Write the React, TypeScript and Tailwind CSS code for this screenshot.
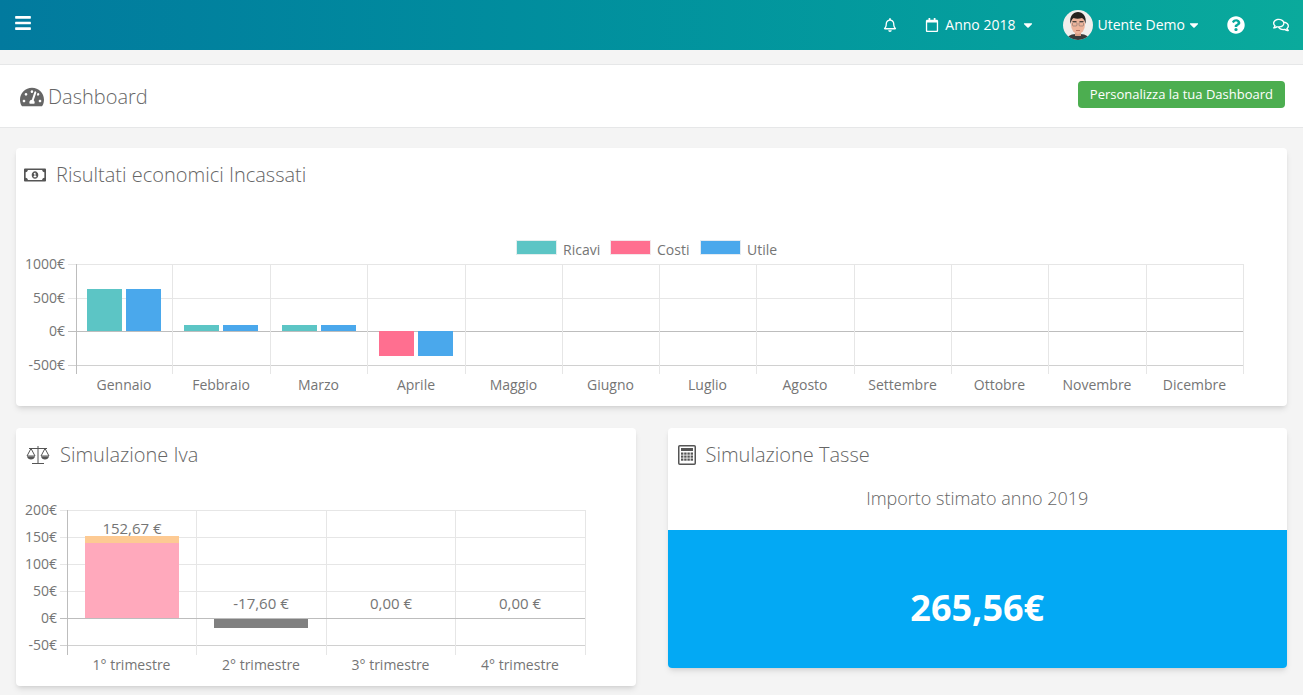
import type { ReactNode } from 'react';
import {
  FaBars,
  FaCaretDown,
  FaQuestionCircle,
  FaRegBell,
  FaRegCalendar,
  FaRegComments,
  FaRegMoneyBillAlt,
  FaTachometerAlt,
} from 'react-icons/fa';

const TEAL = '#5cc5c5';
const PINK = '#ff6f90';
const BLUE = '#4aa8ec';
const GRID = '#e6e6e6';
const AXIS = '#bdbdbd';
const TEXT = '#757575';

const months = ['Gennaio', 'Febbraio', 'Marzo', 'Aprile', 'Maggio', 'Giugno', 'Luglio', 'Agosto', 'Settembre', 'Ottobre', 'Novembre', 'Dicembre'];
const monthLines = [76, 172, 270, 367, 465, 562, 659, 756, 854, 951, 1048, 1146, 1243];

const resultBars = [
  { x: 87, y: 289, h: 42, fill: TEAL },
  { x: 126, y: 289, h: 42, fill: BLUE },
  { x: 184, y: 325, h: 6, fill: TEAL },
  { x: 223, y: 325, h: 6, fill: BLUE },
  { x: 282, y: 325, h: 6, fill: TEAL },
  { x: 321, y: 325, h: 6, fill: BLUE },
  { x: 379, y: 331, h: 25, fill: PINK },
  { x: 418, y: 331, h: 25, fill: BLUE },
];

function Card({ icon, title, children }: { icon: ReactNode; title: string; children: ReactNode }) {
  return (
    <section className="rounded-sm bg-white shadow-md">
      <div className="flex h-14 items-center gap-2.5 pb-0.5 pl-2.5">
        {icon}
        <h2 className="text-xl font-light text-[#666]">{title}</h2>
      </div>
      {children}
    </section>
  );
}

function Avatar() {
  return (
    <svg viewBox="0 0 30 30" className="h-7.5 w-7.5">
      <defs>
        <clipPath id="avatar-clip">
          <circle cx="15" cy="15" r="15" />
        </clipPath>
      </defs>
      <g clipPath="url(#avatar-clip)">
        <rect width="30" height="30" fill="#f1eeec" />
        <path d="M4 30c0-5 5-6 11-6s11 1 11 6z" fill="#3a3a3a" />
        <rect x="12" y="20" width="6" height="6" fill="#d99f86" />
        <ellipse cx="15" cy="14.500" rx="7" ry="9.500" fill="#eeb49b" />
        <path d="M7.500 14c-1.500-8 3-12 7.500-12s9 4 7.500 12c-.5-3-1.500-5-3.500-6-3 1-6 1-8.500 0-1.500 1-2.500 3-3 6z" fill="#26221f" />
        <path d="M9.500 11.500h4M16.500 11.500h4" stroke="#26221f" strokeWidth="0.8" />
        <rect x="9.500" y="12.500" width="4.500" height="3.500" rx="1" fill="none" stroke="#666" strokeWidth="0.5" />
        <rect x="16" y="12.500" width="4.500" height="3.500" rx="1" fill="none" stroke="#666" strokeWidth="0.5" />
        <path d="M13 20.500h4" stroke="#a8604e" strokeWidth="0.8" />
      </g>
    </svg>
  );
}

function ScaleIcon() {
  return (
    <svg viewBox="0 0 24 20" fill="none" stroke="#555" strokeWidth="1" className="h-5 w-6">
      <path d="M12 1v17M6 18.500h12M3 3.500h18" />
      <path d="M5 3.500 1 11h8zM19 3.500 15 11h8z" />
      <path d="M1 11.500c.5 2 2 3 4 3s3.500-1 4-3zM15 11.500c.5 2 2 3 4 3s3.500-1 4-3z" fill="#555" stroke="none" />
    </svg>
  );
}

function CalculatorIcon() {
  return (
    <svg viewBox="0 0 18 20" className="h-5 w-4.5">
      <rect x="0.75" y="0.75" width="16.500" height="18.500" rx="1" fill="none" stroke="#555" strokeWidth="1.500" />
      <rect x="3" y="3" width="12" height="3" fill="#555" />
      {[7.5, 10.5, 13.5].flatMap((y) =>
        [3, 6.2, 9.4, 12.6].map((x) => <rect key={`${x}-${y}`} x={x} y={y} width="2.400" height="2.200" fill="#555" />),
      )}
    </svg>
  );
}

function ResultsChart() {
  return (
    <svg viewBox="16 204 1271 202" className="block w-full" fontSize="14" fill={TEXT}>
      <g shapeRendering="crispEdges">
        <rect x="516" y="240" width="40" height="14" fill={TEAL} stroke="#e3eeee" />
        <rect x="610" y="240" width="40" height="14" fill={PINK} stroke="#f4e6ea" />
        <rect x="700" y="240" width="40" height="14" fill={BLUE} stroke="#e3ebf2" />

        {[264, 298].map((y) => (
          <line key={y} x1="68" x2="1243" y1={y} y2={y} stroke={GRID} />
        ))}
        <line x1="68" x2="1243" y1="331" y2="331" stroke={AXIS} />
        <line x1="68" x2="1243" y1="365" y2="365" stroke="#d0d0d0" />
        {monthLines.map((x, i) => (
          <line key={x} x1={x} x2={x} y1="264" y2="374" stroke={i === 0 ? AXIS : GRID} />
        ))}

        {resultBars.map((b) => (
          <rect key={`${b.x}`} x={b.x} y={b.y} width="35" height={b.h} fill={b.fill} />
        ))}
      </g>

      <text x="563" y="255">Ricavi</text>
      <text x="657" y="255">Costi</text>
      <text x="747" y="255">Utile</text>
      {[
        ['1000€', 269],
        ['500€', 303],
        ['0€', 336],
        ['-500€', 370],
      ].map(([label, y]) => (
        <text key={label} x="65" y={y} textAnchor="end">
          {label}
        </text>
      ))}
      {months.map((m, i) => (
        <text key={m} x={(monthLines[i] + monthLines[i + 1]) / 2} y="390" textAnchor="middle">
          {m}
        </text>
      ))}
    </svg>
  );
}

function IvaChart() {
  const lines = [67, 196, 326, 455, 585];
  return (
    <svg viewBox="16 484 619.5 202" className="block w-full" fontSize="14" fill={TEXT}>
      <g shapeRendering="crispEdges">
        {[510, 537, 564, 591].map((y) => (
          <line key={y} x1="60" x2="585" y1={y} y2={y} stroke={GRID} />
        ))}
        <line x1="60" x2="585" y1="645" y2="645" stroke="#d0d0d0" />
        {lines.map((x, i) => (
          <line key={x} x1={x} x2={x} y1="510" y2="655" stroke={i === 0 ? AXIS : GRID} />
        ))}

        <rect x="85" y="536" width="94" height="7" fill="#fdca93" />
        <rect x="85" y="543" width="94" height="75" fill="#ffa9bc" />
        <rect x="214" y="618" width="94" height="10" fill="#808080" />
        <line x1="60" x2="585" y1="618" y2="618" stroke={AXIS} />
      </g>

      {[
        ['200€', 515],
        ['150€', 542],
        ['100€', 569],
        ['50€', 596],
        ['0€', 623],
        ['-50€', 650],
      ].map(([label, y]) => (
        <text key={label} x="57" y={y} textAnchor="end">
          {label}
        </text>
      ))}
      {[
        ['152,67 €', 132, 534],
        ['-17,60 €', 261, 609],
        ['0,00 €', 391, 609],
        ['0,00 €', 520, 609],
      ].map(([label, x, y]) => (
        <text key={`${label}-${x}`} x={x} y={y} fontSize="15" textAnchor="middle">
          {label}
        </text>
      ))}
      {['1° trimestre', '2° trimestre', '3° trimestre', '4° trimestre'].map((q, i) => (
        <text key={q} x={(lines[i] + lines[i + 1]) / 2} y="670" textAnchor="middle">
          {q}
        </text>
      ))}
    </svg>
  );
}

export default function App() {
  return (
    <div className="h-screen overflow-hidden bg-[#f4f4f4] font-['Open_Sans',sans-serif] text-sm text-[#666]">
      <header className="flex h-[50px] items-center justify-between bg-linear-to-r from-[#027a9e] to-[#0aaa9c] pr-3.5 pl-3.5 text-white">
        <FaBars className="mb-1 text-lg" />
        <div className="flex items-center">
          <FaRegBell className="text-sm" />
          <FaRegCalendar className="ml-7 text-sm" />
          <span className="ml-1.5">Anno 2018</span>
          <FaCaretDown className="ml-1.5 text-sm" />
          <div className="ml-7 flex items-center">
            <Avatar />
            <span className="ml-1">Utente Demo</span>
            <FaCaretDown className="ml-0.5 text-sm" />
          </div>
          <FaQuestionCircle className="ml-6.5 text-lg" />
          <FaRegComments className="ml-7 text-base" />
        </div>
      </header>

      <div className="mt-3.5 flex h-16 items-start justify-between border-y border-[#e6e7e8] bg-white px-5 pt-4">
        <h1 className="mt-0.5 flex items-center gap-1 text-xl font-light">
          <FaTachometerAlt className="text-2xl" />
          Dashboard
        </h1>
        <button className="-mr-0.5 rounded-sm bg-[#4cae50] px-3 py-1 text-[13px] text-white">Personalizza la tua Dashboard</button>
      </div>

      <main className="px-4 pt-5">
        <Card icon={<FaRegMoneyBillAlt className="-ml-0.5 h-5.5 w-5.5 text-[#555]" />} title="Risultati economici Incassati">
          <ResultsChart />
        </Card>

        <div className="mt-[22px] grid grid-cols-2 items-start gap-8">
          <Card icon={<ScaleIcon />} title="Simulazione Iva">
            <IvaChart />
          </Card>
          <Card icon={<CalculatorIcon />} title="Simulazione Tasse">
            <p className="pb-4.5 text-center text-lg leading-7 font-light">Importo stimato anno 2019</p>
            <div className="rounded-b-sm bg-[#03a9f4] pt-14 pb-9.5 text-center text-4xl leading-11 font-bold text-white">265,56€</div>
          </Card>
        </div>
      </main>
    </div>
  );
}
